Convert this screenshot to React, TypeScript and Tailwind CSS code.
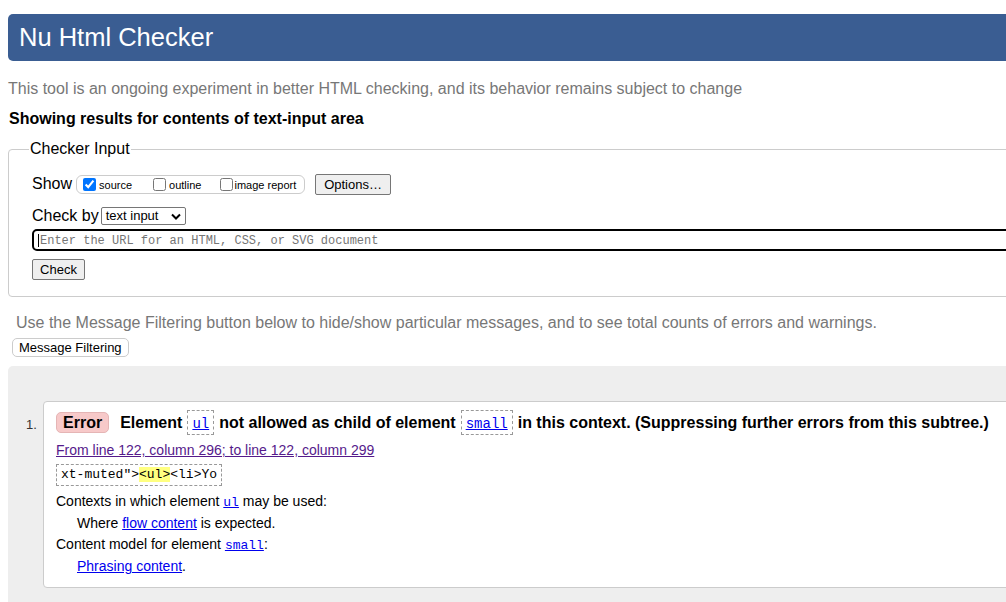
import React from "react";

const sans = "font-['Liberation_Sans',Arial,sans-serif]";
const mono = "font-['Liberation_Mono','DejaVu_Sans_Mono',monospace]";

function Code({ children }: { children: React.ReactNode }) {
  return (
    <span className="inline-block border border-dashed border-[#999] px-[4px] h-[25px] mx-[5px] leading-[23px]">
      <a href="#" className={`${mono} text-[14px] font-normal text-[#0000ee] underline`}>
        {children}
      </a>
    </span>
  );
}

export default function App() {
  return (
    <div className={`${sans} w-[1006px] h-[602px] overflow-hidden bg-white text-black`}>
      <div className="w-[1100px] pl-2">
        <div className="mt-[14px] h-[47px] bg-[#3a5d92] rounded-[5px] pl-[11px] flex items-center">
          <h1 className="text-white text-[25.5px] leading-none">Nu Html Checker</h1>
        </div>

        <p className="mt-[19px] text-[16px] leading-[18px] text-[#777]">
          This tool is an ongoing experiment in better HTML checking, and its behavior remains subject to change
        </p>
        <p className="mt-[12px] ml-px text-[16px] leading-[18px] font-bold">
          Showing results for contents of text-input area
        </p>

        <fieldset className="mt-[12px] border border-[#ccc] rounded-[4px] pl-[23px] pb-[15px]">
          <legend className="-ml-[3px] px-px text-[16px] leading-[18px]">Checker Input</legend>

          <div className="mt-[15px] flex items-center h-[22px]">
            <span className="text-[16px]">Show</span>
            <div className="ml-[4px] h-[19px] w-[229px] border border-[#ccc] rounded-[6px] flex items-center pl-[6px] text-[11px]">
              <label className="flex items-center">
                <input type="checkbox" defaultChecked className="m-0 w-[13px] h-[13px] accent-[#0075ff]" />
                <span className="ml-[3px] mt-[2px]">source</span>
              </label>
              <label className="flex items-center ml-[21px]">
                <input type="checkbox" className="m-0 w-[13px] h-[13px]" />
                <span className="ml-[3px] mt-[2px]">outline</span>
              </label>
              <label className="flex items-center ml-[19px]">
                <input type="checkbox" className="m-0 w-[13px] h-[13px]" />
                <span className="ml-px mt-[2px]">image report</span>
              </label>
            </div>
            <button className="ml-[10px] h-[21px] w-[76px] border border-[#767676] rounded-[2px] bg-[#efefef] text-[13px]">
              Options…
            </button>
          </div>

          <div className="mt-[11px] flex items-center h-[20px]">
            <span className="text-[16px]">Check by</span>
            <div className="ml-[2px] h-[18px] w-[85px] border border-[#767676] rounded-[2px] flex items-center justify-between pl-[4px] pr-[4px] text-[13px]">
              <span>text input</span>
              <svg width="10" height="7" viewBox="0 0 10 7" className="mt-px">
                <path d="M1 1.5 L5 5.5 L9 1.5" fill="none" stroke="#000" strokeWidth="2" />
              </svg>
            </div>
          </div>

          <div className="mt-[3px] h-[22px] border-2 border-black rounded-l-[5px] flex items-center pl-[4px]">
            <span className={`${mono} text-[12px] text-[#757575] mt-px`}>
              <span className="inline-block w-px h-[13px] bg-black align-middle mr-px" />
              Enter the URL for an HTML, CSS, or SVG document
            </span>
          </div>

          <button className="mt-[8px] h-[21px] w-[53px] border border-[#767676] rounded-[2px] bg-[#efefef] text-[13px]">
            Check
          </button>
        </fieldset>

        <p className="mt-[17px] ml-[8px] text-[16px] leading-[18px] text-[#777]">
          Use the Message Filtering button below to hide/show particular messages, and to see total counts of errors and warnings.
        </p>
        <button className="block mt-[6px] ml-[4px] h-[19px] leading-[17px] px-[6px] border border-[#ccc] rounded-[5px] bg-white text-[13px]">
          Message Filtering
        </button>

        <div className="mt-[9px] bg-[#eeeeee] rounded-tl-[5px] pt-[35px] pb-[20px] pl-[18px]">
          <div className="flex">
            <div className="w-[17px] pt-[14px] text-[13px] text-[#333]">1.</div>
            <div className="flex-1 border border-[#ccc] rounded-[4px] bg-white pl-[12px] pt-[8px] pb-[10px]">
              <div className="flex items-center text-[16px] font-bold">
                <span className="bg-[#f7c9c9] border border-[#e5b5b5] rounded-[5px] h-[21px] px-[6px] flex items-center">Error</span>
                <span className="ml-[11px]">Element</span>
                <Code>ul</Code>
                <span>not allowed as child of element</span>
                <Code>small</Code>
                <span>in this context. (Suppressing further errors from this subtree.)</span>
              </div>
              <a href="#" className="block mt-[7px] text-[14px] leading-[16px] text-[#551a8b] underline">
                From line 122, column 296; to line 122, column 299
              </a>
              <div className={`${mono} mt-[6px] inline-block border border-dashed border-[#999] px-[4px] h-[22px] leading-[20px] text-[13px]`}>
                xt-muted"&gt;<span className="bg-[#ffff80]">&lt;ul&gt;</span>&lt;li&gt;Yo
              </div>
              <div className="mt-[5px] text-[14px] leading-[21px]">
                <p>
                  Contexts in which element <a href="#" className={`${mono} text-[13px] text-[#0000ee] underline`}>ul</a> may be used:
                </p>
                <p className="pl-[21px]">
                  Where <a href="#" className="text-[#0000ee] underline">flow content</a> is expected.
                </p>
                <p>
                  Content model for element <a href="#" className={`${mono} text-[13px] text-[#0000ee] underline`}>small</a>:
                </p>
                <p className="pl-[21px]">
                  <a href="#" className="text-[#0000ee] underline">Phrasing content</a>.
                </p>
              </div>
            </div>
          </div>
        </div>
      </div>
    </div>
  );
}
